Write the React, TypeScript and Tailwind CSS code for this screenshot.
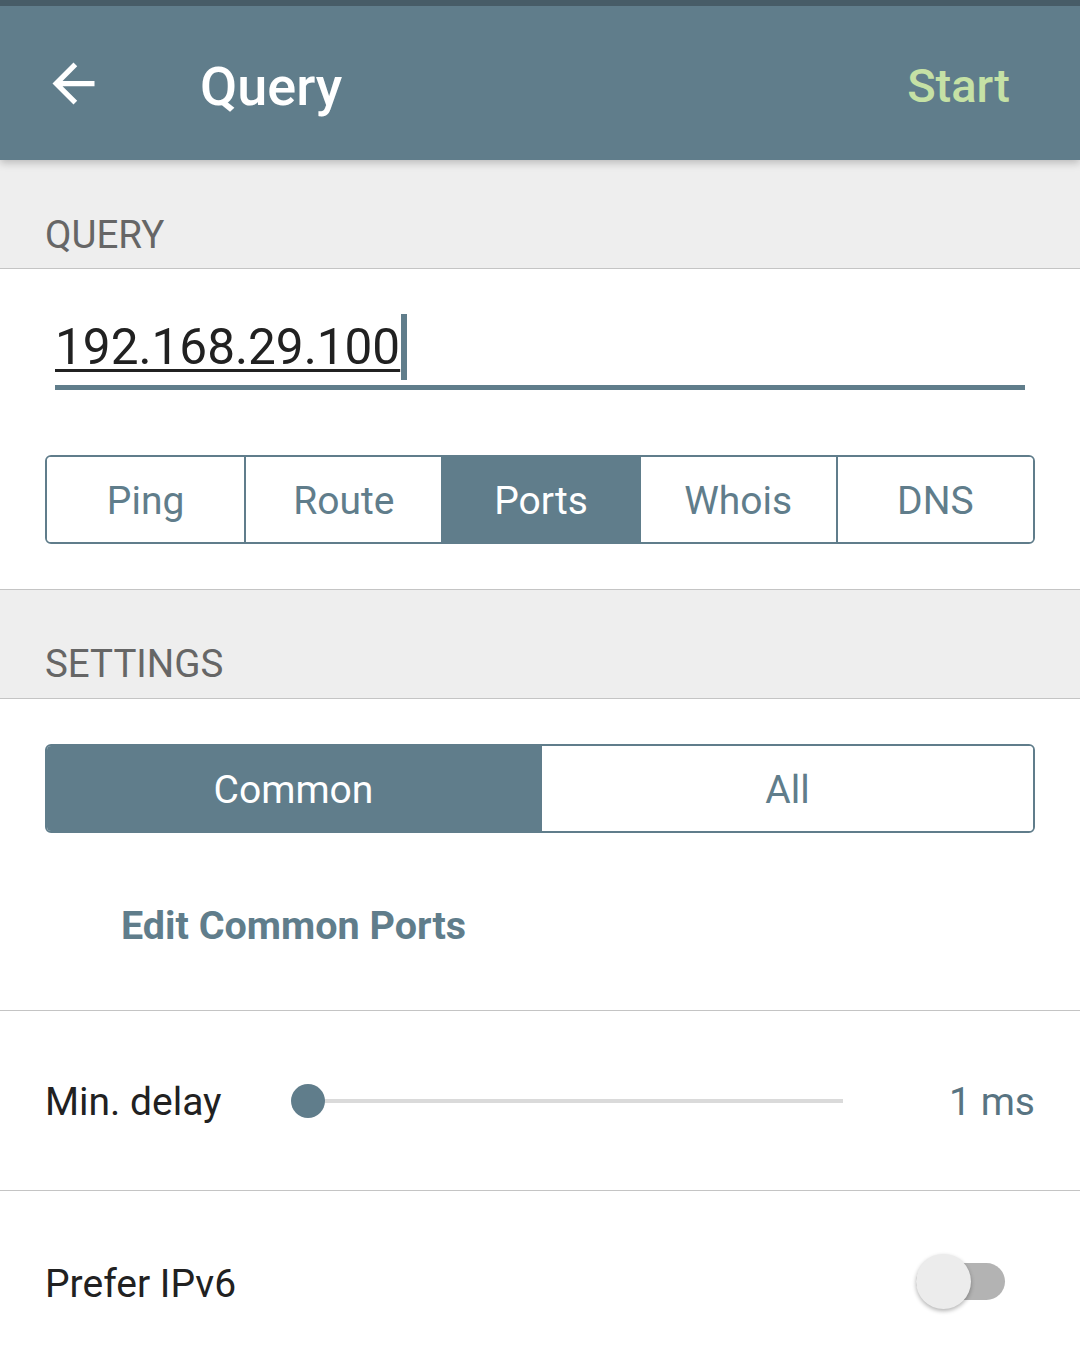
import { useState } from "react"

const tools = ["Ping", "Route", "Ports", "Whois", "DNS"]

export default function App() {
  const [tool, setTool] = useState("Ports")
  const [mode, setMode] = useState<"common" | "all">("common")
  const [ipv6, setIpv6] = useState(false)

  return (
    <div className="w-[1080px] min-h-[1368px] bg-white font-['Roboto',sans-serif] text-[#212121] overflow-hidden">
      {/* Status strip + toolbar */}
      <div className="relative z-10 shadow-[0_3px_8px_rgba(0,0,0,0.22)]">
        <div className="h-[6px] bg-[#475c67]" />
        <div className="h-[154px] bg-[#607d8b] flex items-center">
          <button className="ml-[42px] w-[63px] h-[63px] flex items-center justify-center">
            <svg viewBox="0 0 24 24" className="w-[63px] h-[63px]" fill="#ffffff">
              <path d="M20 11H7.83l5.59-5.59L12 4l-8 8 8 8 1.41-1.41L7.83 13H20v-2z" />
            </svg>
          </button>
          <h1 className="ml-[95px] mt-[7px] text-[54px] font-medium text-white leading-none">Query</h1>
          <button className="ml-auto mr-[70px] mt-[5px] text-[47px] font-medium text-[#c5e1a5] leading-none">Start</button>
        </div>
      </div>

      {/* QUERY section header */}
      <div className="h-[109px] bg-[#eeeeee] border-b border-[#c4c4c4] flex items-end pb-[14px] px-[45px]">
        <span className="text-[38.5px] text-[#666666] leading-none">QUERY</span>
      </div>

      {/* Query input */}
      <div className="px-[45px] pt-[45px] pb-[45px]">
        <div className="pl-[10px] pr-[10px]">
          <div className="flex items-start h-[66px]">
            <span className="text-[49.5px] leading-[66px] text-[#212121] underline decoration-[3px] underline-offset-[5px] decoration-[#212121]">
              192.168.29.100
            </span>
            <span className="w-[6px] h-[66px] bg-[#607d8b] ml-[1px]" />
          </div>
          <div className="mt-[5px] h-[5px] bg-[#607d8b]" />
        </div>

        <div className="mt-[65px] h-[89px] grid grid-cols-5 border-2 border-[#607d8b] rounded-[6px] overflow-hidden">
          {tools.map((t, i) => (
            <button
              key={t}
              onClick={() => setTool(t)}
              className={`flex items-center justify-center pt-[4px] text-[39px] ${i > 0 ? "border-l-2 border-[#607d8b]" : ""} ${
                tool === t ? "bg-[#607d8b] text-white" : "bg-white text-[#607d8b]"
              }`}
            >
              {t}
            </button>
          ))}
        </div>
      </div>

      {/* SETTINGS section header */}
      <div className="h-[110px] bg-[#eeeeee] border-y border-[#c4c4c4] flex items-end pb-[15px] px-[45px]">
        <span className="text-[38.5px] text-[#666666] leading-none">SETTINGS</span>
      </div>

      {/* Common / All */}
      <div className="px-[45px] pt-[45px] pb-[57px] border-b border-[#c4c4c4]">
        <div className="h-[89px] grid grid-cols-2 border-2 border-[#607d8b] rounded-[6px] overflow-hidden">
          <button
            onClick={() => setMode("common")}
            className={`flex items-center justify-center pt-[4px] text-[39px] ${
              mode === "common" ? "bg-[#607d8b] text-white" : "bg-white text-[#607d8b]"
            }`}
          >
            Common
          </button>
          <button
            onClick={() => setMode("all")}
            className={`flex items-center justify-center pt-[4px] text-[39px] border-l-2 border-[#607d8b] ${
              mode === "all" ? "bg-[#607d8b] text-white" : "bg-white text-[#607d8b]"
            }`}
          >
            All
          </button>
        </div>
        <div className="mt-[64px] h-[56px] flex items-center pl-[76px] pt-[2px]">
          <span className="text-[39.5px] font-bold text-[#607d8b] leading-none">Edit Common Ports</span>
        </div>
      </div>

      {/* Min. delay */}
      <div className="h-[180px] px-[45px] flex items-center border-b border-[#c4c4c4]">
        <span className="w-[246px] flex-none pt-[4px] text-[39px] leading-none">Min. delay</span>
        <div className="relative w-[569px] h-[36px] flex-none">
          <div className="absolute left-[17px] right-[17px] top-[16px] h-[4px] bg-[#dadada]" />
          <div className="absolute left-0 top-[1px] w-[34px] h-[34px] rounded-full bg-[#607d8b]" />
        </div>
        <span className="flex-1 text-right pt-[4px] text-[39px] text-[#587482] leading-none">1 ms</span>
      </div>

      {/* Prefer IPv6 */}
      <div className="h-[182px] pl-[45px] pr-[75px] flex items-center justify-between">
        <span className="pt-[4px] text-[39px] leading-none">Prefer IPv6</span>
        <button onClick={() => setIpv6(!ipv6)} className="relative w-[89px] h-[56px]">
          <span className={`absolute left-0 right-0 top-[9px] h-[37px] rounded-full ${ipv6 ? "bg-[#b0bec5]" : "bg-[#b3b3b3]"}`} />
          <span
            className={`absolute top-0 w-[55px] h-[55px] rounded-full shadow-[0_2px_4px_rgba(0,0,0,0.3)] ${
              ipv6 ? "right-0 bg-[#607d8b]" : "left-0 bg-[#ececec]"
            }`}
          />
        </button>
      </div>
    </div>
  )
}
